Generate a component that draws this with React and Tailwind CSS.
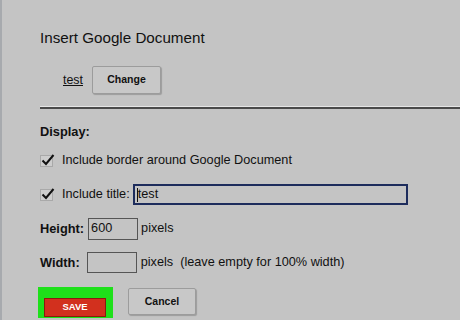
import React from 'react';

const Check = () => (
  <span className="relative inline-block w-[13px] h-[12px] border border-[#a9a9a9] bg-[#cdcdcd] shrink-0">
    <svg className="absolute left-[0px] top-[-3px]" width="14" height="14" viewBox="0 0 14 14">
      <path d="M1.5 7.5 L5 11 L12.5 2" fill="none" stroke="#111" strokeWidth="2" />
    </svg>
  </span>
);

const App = () => {
  return (
    <div
      className="w-[460px] h-[320px] bg-[#c4c4c4] border-l-2 border-[#a7aaae] overflow-hidden text-[#111]"
      style={{ fontFamily: '"Liberation Sans", Arial, sans-serif' }}
    >
      <div className="pl-[38px] flex flex-col">
        <h1 className="pt-[30px] text-[15.2px] leading-[16px] font-normal">Insert Google Document</h1>

        <div className="mt-[20px] h-[28px] flex items-center">
          <a className="ml-[23px] text-[12.4px] underline text-[#111]">test</a>
          <button className="ml-[9px] w-[69px] h-[28px] bg-[#c8c8c8] border border-[#9c9c9c] rounded-[2px] shadow-[1px_1px_1px_rgba(0,0,0,0.2)] text-[10.5px] font-bold">
            Change
          </button>
        </div>

        <div className="mt-[12px]">
          <div className="h-[1px] bg-[#e6e6e6]" />
          <div className="h-[2px] bg-[#4a4a4a]" />
        </div>

        <div className="mt-[16px] text-[12.8px] leading-[13px] font-bold">Display:</div>

        <label className="mt-[16px] h-[14px] flex items-center text-[12.7px]">
          <Check />
          <span className="ml-[9px]">Include border around Google Document</span>
        </label>

        <div className="mt-[16px] h-[21px] flex items-center text-[12.7px]">
          <Check />
          <span className="ml-[9px]">Include title:</span>
          <div className="ml-[3px] w-[275px] h-[21px] border-2 border-[#1d2c5c] flex items-center pl-[2px]">
            <span className="w-[1px] h-[14px] bg-[#111]" />
            <span>test</span>
          </div>
        </div>

        <div className="mt-[13px] h-[22px] flex items-center text-[12.7px]">
          <span className="font-bold text-[12.8px]">Height:</span>
          <div className="ml-[4px] w-[50px] h-[22px] border border-[#555] flex items-center pl-[2px]">600</div>
          <span className="ml-[3px]">pixels</span>
        </div>

        <div className="mt-[12px] h-[21px] flex items-center text-[12.7px]">
          <span className="font-bold text-[12.8px]">Width:</span>
          <div className="ml-[7px] w-[50px] h-[21px] border border-[#555]" />
          <span className="ml-[4px] whitespace-pre">pixels  (leave empty for 100% width)</span>
        </div>

        <div className="mt-[14px] flex items-start">
          <div className="ml-[-2px] w-[75px] h-[31px] bg-[#1ee01a] pl-[6px] pt-[6px]">
            <button className="w-[62px] h-[19px] bg-[#d2301e] text-white text-[9.5px] font-bold border border-[#8a1a10]">
              SAVE
            </button>
          </div>
          <button className="ml-[15px] mt-[1px] w-[68px] h-[27px] bg-[#c8c8c8] border border-[#9c9c9c] rounded-[2px] shadow-[1px_1px_1px_rgba(0,0,0,0.2)] text-[10.5px] font-bold">
            Cancel
          </button>
        </div>
      </div>
    </div>
  );
};

export default App;
